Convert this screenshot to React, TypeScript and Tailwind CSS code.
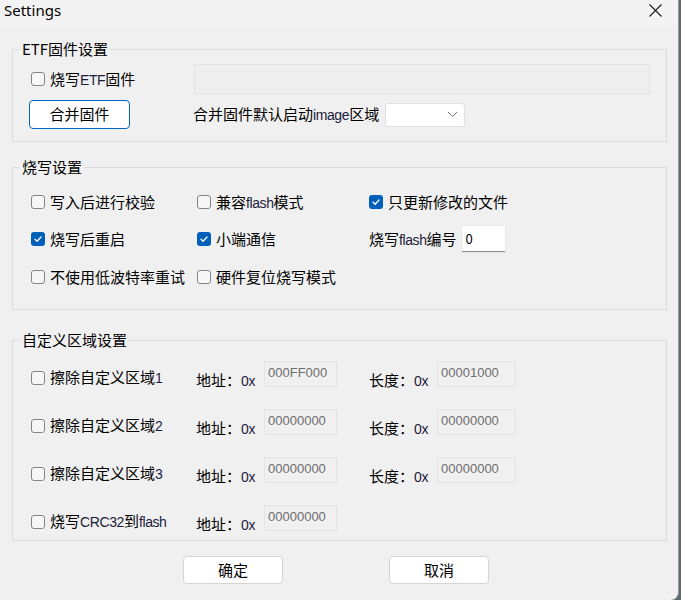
import React from "react";

const F = { fontFamily: '"Noto Sans CJK SC", "Noto Sans", sans-serif' };

function L({ children }: { children: React.ReactNode }) {
  return (
    <span className="text-[14px] tracking-[-0.4px] text-[#1c1c3a]" style={{ fontFamily: '"Liberation Sans", "Noto Sans", sans-serif' }}>
      {children}
    </span>
  );
}

function Box({ checked }: { checked?: boolean }) {
  return checked ? (
    <span className="flex h-[14px] w-[14px] shrink-0 items-center justify-center rounded-[3px] bg-[#005fb8]">
      <svg width="10" height="10" viewBox="0 0 10 10" fill="none">
        <path d="M2 5.2 L4.1 7.2 L8 3" stroke="white" strokeWidth="1.3" strokeLinecap="round" strokeLinejoin="round" />
      </svg>
    </span>
  ) : (
    <span className="h-[14px] w-[14px] shrink-0 rounded-[3px] border border-[#858585] bg-[#f7f7f7]" />
  );
}

function Check({ checked, children }: { checked?: boolean; children: React.ReactNode }) {
  return (
    <span className="flex items-center gap-[5px] whitespace-nowrap text-[15px] leading-[20px] text-black">
      <Box checked={checked} />
      <span>{children}</span>
    </span>
  );
}

function Group({ title, children, className }: { title: string; children: React.ReactNode; className?: string }) {
  return (
    <fieldset className={"mx-[12px] w-[655px] border border-[#dcdcdc] " + (className ?? "")}>
      <legend className="ml-[6px] pl-[3px] pr-[2px] text-[15px] leading-[20px] text-black">{title}</legend>
      {children}
    </fieldset>
  );
}

function HexInput({ value, w }: { value: string; w: string }) {
  return (
    <span
      className={"block h-[26px] border border-[#e3e3e3] bg-[#f0f0f0] pl-[3px] pt-[1px] text-[13px] leading-[20px] text-[#6e6e6e] " + w}
      style={{ fontFamily: '"Liberation Sans", "Noto Sans", sans-serif' }}
    >
      {value}
    </span>
  );
}

function Prefix({ label }: { label: string }) {
  return (
    <span className="whitespace-nowrap text-[15px] leading-[20px] text-black">
      {label}：<L>0x</L>
    </span>
  );
}

function CustomRow({ check, addr, len }: { check: React.ReactNode; addr: string; len?: string }) {
  return (
    <div className="flex h-[26px] items-start">
      <div className="mt-[6px] w-[183px] pl-[18px]">
        <Check>{check}</Check>
      </div>
      <div className="flex w-[173px] items-start">
        <div className="mt-[6px] w-[68px]">
          <Prefix label="地址" />
        </div>
        <HexInput value={addr} w="w-[73px]" />
      </div>
      {len !== undefined && (
        <div className="flex items-start">
          <div className="mt-[6px] w-[68px]">
            <Prefix label="长度" />
          </div>
          <HexInput value={len} w="w-[79px]" />
        </div>
      )}
    </div>
  );
}

export default function App() {
  return (
    <div className="flex h-[600px] w-[681px] bg-[#5d6a70]" style={F}>
      <div className="flex h-[600px] w-[679px] flex-col overflow-hidden rounded-br-[8px] border-r border-[#9a9a9a] bg-[#f0f0f0]">
        <div className="flex h-[26px] shrink-0 items-start justify-between bg-[#f3f3f3] pl-[4px] pr-[16px] pt-[1px]">
          <span className="text-[15px] leading-[18px] text-black" style={{ fontFamily: '"Noto Sans", sans-serif' }}>Settings</span>
          <svg width="13" height="13" viewBox="0 0 13 13" className="mt-[3px]">
            <path d="M0.5 0.5 L12.5 12.5 M12.5 0.5 L0.5 12.5" stroke="#1a1a1a" strokeWidth="1.1" />
          </svg>
        </div>

        <Group title="ETF固件设置" className="mt-[13px] pb-[12px]">
          <div className="mt-[5px] flex h-[30px] items-center">
            <div className="w-[181px] pl-[18px]">
              <Check>
                烧写<L>ETF</L>固件
              </Check>
            </div>
            <span className="h-[30px] w-[456px] border border-[#e3e3e3] bg-[#efefef]" />
          </div>
          <div className="mt-[6px] flex h-[29px] items-center">
            <div className="w-[180px] pl-[16px]">
              <button className="flex h-[29px] w-[101px] items-center justify-center rounded-[4px] border border-[#0067c0] bg-white text-[15px] text-black">
                合并固件
              </button>
            </div>
            <span className="whitespace-nowrap text-[15px] leading-[20px] text-black">
              合并固件默认启动<L>image</L>区域
            </span>
            <span className="ml-[6px] flex h-[24px] w-[80px] items-center justify-end rounded-[3px] border border-[#e0e0e0] bg-white pr-[6px]">
              <svg width="11" height="7" viewBox="0 0 11 7">
                <path d="M1 1 L5.5 5.5 L10 1" stroke="#777" strokeWidth="1" fill="none" />
              </svg>
            </span>
          </div>
        </Group>

        <Group title="烧写设置" className="mt-[15px] pb-[19px]">
          <div className="mt-[12px] flex h-[26px] items-center pl-[18px]">
            <div className="w-[166px]">
              <Check>写入后进行校验</Check>
            </div>
            <div className="w-[172px]">
              <Check>
                兼容<L>flash</L>模式
              </Check>
            </div>
            <Check checked>只更新修改的文件</Check>
          </div>
          <div className="mt-[11px] flex h-[26px] items-center pl-[18px]">
            <div className="w-[166px]">
              <Check checked>烧写后重启</Check>
            </div>
            <div className="w-[172px]">
              <Check checked>小端通信</Check>
            </div>
            <span className="whitespace-nowrap text-[15px] leading-[20px] text-black">
              烧写<L>flash</L>编号
            </span>
            <span className="ml-[5px] flex h-[26px] w-[43px] items-center border-b border-[#8a8a8a] bg-white pl-[4px] text-[13px] text-black" style={{ boxShadow: "0 0 0 1px #e8e8e8" }}>
              0
            </span>
          </div>
          <div className="mt-[12px] flex h-[26px] items-center pl-[18px]">
            <div className="w-[166px]">
              <Check>不使用低波特率重试</Check>
            </div>
            <div className="w-[172px]">
              <Check>硬件复位烧写模式</Check>
            </div>
          </div>
        </Group>

        <Group title="自定义区域设置" className="mt-[20px] pb-[9px]">
          <div className="mt-[11px] flex flex-col gap-[22px]">
            <CustomRow check={<>擦除自定义区域<L>1</L></>} addr="000FF000" len="00001000" />
            <CustomRow check={<>擦除自定义区域<L>2</L></>} addr="00000000" len="00000000" />
            <CustomRow check={<>擦除自定义区域<L>3</L></>} addr="00000000" len="00000000" />
            <CustomRow check={<>烧写<L>CRC32</L>到<L>flash</L></>} addr="00000000" />
          </div>
        </Group>

        <div className="mt-[15px] flex pl-[183px]">
          <button className="flex h-[28px] w-[100px] items-center justify-center rounded-[4px] border border-[#d5d5d5] bg-white text-[15px] text-black">
            确定
          </button>
          <button className="ml-[106px] flex h-[28px] w-[100px] items-center justify-center rounded-[4px] border border-[#d5d5d5] bg-white text-[15px] text-black">
            取消
          </button>
        </div>
      </div>
    </div>
  );
}
